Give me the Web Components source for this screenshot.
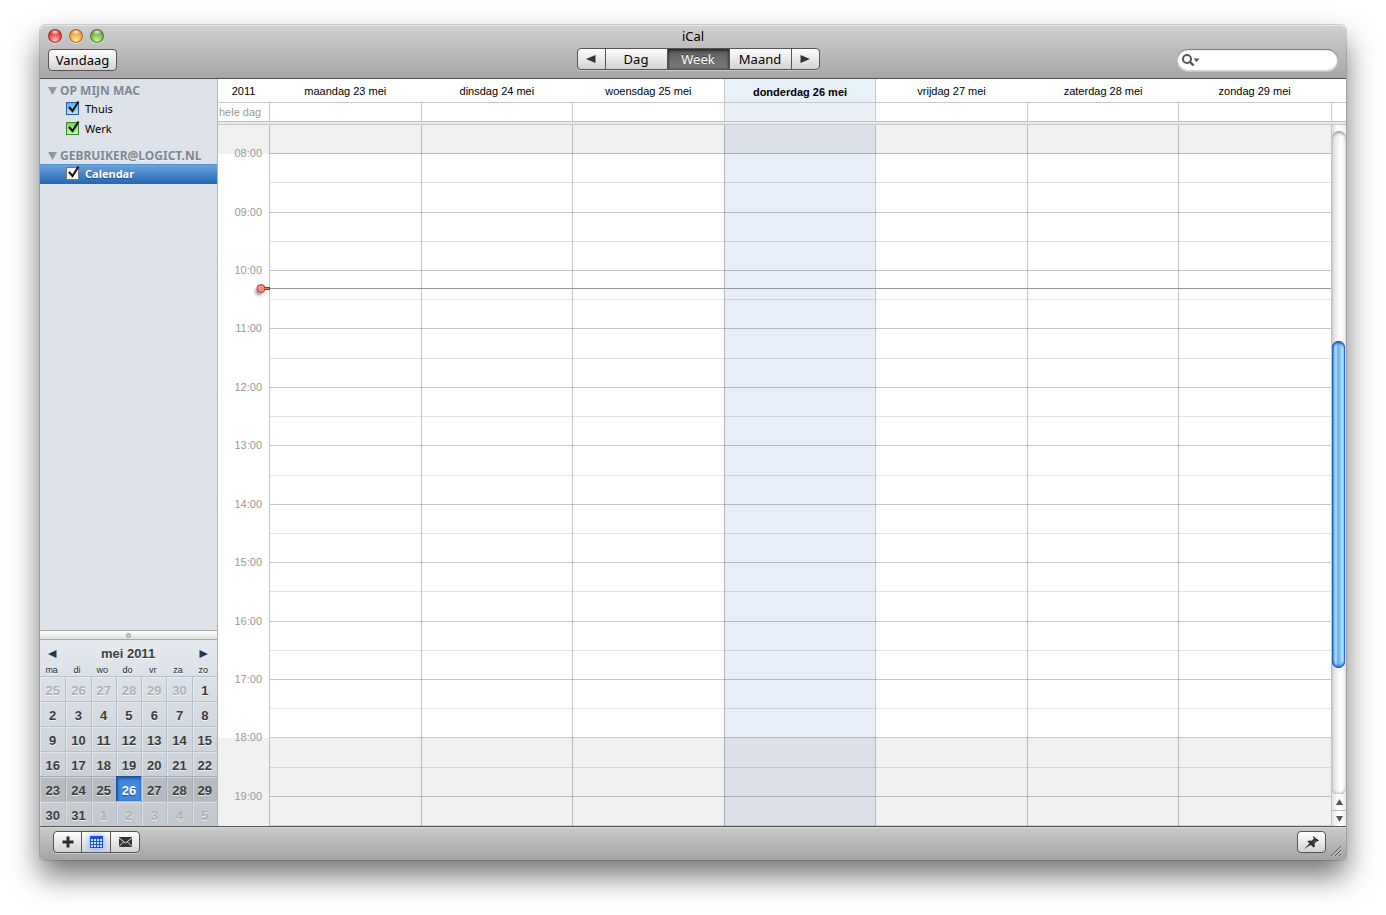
<!DOCTYPE html>
<html lang="nl">
<head>
<meta charset="utf-8">
<title>iCal</title>
<style>
  :root {
    --ui: "Noto Sans", "Open Sans", sans-serif;
    --helv: "Liberation Sans", Arial, sans-serif;
    --edge: #555;
    --line: rgba(0, 0, 0, .22);
    --half: rgba(0, 0, 0, .11);
  }
  html, body { margin: 0; height: 100%; }
  body {
    box-sizing: border-box;
    padding: 25px 40px 55px;
    background: #fff;
    color: #000;
    font-family: var(--ui);
    overflow: hidden;
  }
</style>
</head>
<body>
<ical-window></ical-window>

<script>
const define = (name, html, setup) => {
  const tpl = document.createElement('template');
  tpl.innerHTML = html;
  customElements.define(name, class extends HTMLElement {
    constructor() {
      super();
      this.attachShadow({ mode: 'open' }).append(tpl.content.cloneNode(true));
    }
    connectedCallback() { if (setup) setup(this, this.shadowRoot); }
  });
};

const buttonCss = `
  button {
    box-sizing: border-box;
    height: 22px;
    margin: 0;
    padding: 0;
    border: 1px solid #555;
    background: linear-gradient(#fdfdfd, #e9e9e9 50%, #d2d2d2);
    color: #000;
    font: 13px/20px var(--ui);
    display: flex;
    align-items: center;
    justify-content: center;
  }
  svg { display: block; }
`;

/* A row of joined push buttons */
define('segment-group', `
  <style>
    :host { display: flex; border-radius: 4px; box-shadow: 0 1px 0 rgba(255,255,255,.35); }
    ::slotted(push-button:not(:first-child)) { margin-left: -1px; }
  </style>
  <slot></slot>`);

define('push-button', `
  <style>
    :host { display: block; }
    ${buttonCss}
    button { width: 100%; border-radius: 4px; }
    :host([seg]) button { border-radius: 0; }
    :host([seg=first]) button { border-radius: 4px 0 0 4px; }
    :host([seg=last]) button { border-radius: 0 4px 4px 0; }
    :host([pressed]) button {
      background: linear-gradient(#5c5c5c, #6e6e6e 50%, #7a7a7a);
      box-shadow: inset 0 2px 3px rgba(0,0,0,.5), inset 0 0 3px rgba(0,0,0,.4);
      color: #fff;
      text-shadow: 0 -1px 0 rgba(0,0,0,.4);
    }
  </style>
  <button type="button"><slot></slot></button>`,
  (host, root) => {
    const label = host.getAttribute('label');
    if (label) root.querySelector('button').setAttribute('aria-label', label);
  });

define('traffic-lights', `
  <style>
    :host { display: flex; gap: 7px; }
    button {
      width: 14px; height: 14px; padding: 0; border: 0; border-radius: 50%;
      background:
        radial-gradient(ellipse 5px 3px at 50% 20%, rgba(255,255,255,.85), rgba(255,255,255,0)),
        radial-gradient(circle at 50% 85%, var(--lo), var(--mid) 50%, var(--hi) 90%);
      box-shadow: inset 0 0 1px 1px var(--rim), 0 1px 0 rgba(255,255,255,.5);
    }
    .r { --lo: #ffc4c4; --mid: #ee4a4c; --hi: #b3191f; --rim: #8d2b2c; }
    .y { --lo: #fff2a0; --mid: #f6ae46; --hi: #c9701c; --rim: #97602a; }
    .g { --lo: #d5f5a2; --mid: #7fbf55; --hi: #42872c; --rim: #40702f; }
  </style>
  <button class="r" type="button" aria-label="Sluit"></button>
  <button class="y" type="button" aria-label="Minimaliseer"></button>
  <button class="g" type="button" aria-label="Zoom"></button>`);

define('search-field', `
  <style>
    :host {
      box-sizing: border-box;
      display: flex; align-items: center;
      width: 161px; height: 22px; padding: 0 10px 0 4px;
      border-radius: 11px;
      background: #fff;
      box-shadow: inset 0 1px 1px #777, inset 0 0 1px 1px rgba(0,0,0,.18), 0 1px 0 rgba(255,255,255,.3);
    }
    label { flex: none; }
    svg { display: block; }
    input { flex: 1; min-width: 0; border: 0; padding: 0 4px; background: none; outline: 0; font: 11px/14px var(--ui); }
  </style>
  <label for="q" aria-label="Zoek">
    <svg width="19" height="16" viewBox="0 0 19 16">
      <circle cx="6" cy="7" r="4" fill="none" stroke="#555" stroke-width="2"/>
      <path d="M9 10l3.500 3.500" stroke="#555" stroke-width="2.400"/>
      <path d="M12.500 6.500h6l-3 3.500z" fill="#555"/>
    </svg>
  </label>
  <input id="q" type="text">`);

define('ical-toolbar', `
  <style>
    :host {
      box-sizing: border-box;
      display: grid;
      grid-template-columns: 1fr auto 1fr;
      grid-template-rows: 22px 22px;
      align-items: center;
      row-gap: 1px;
      height: 54px;
      padding: 0 8px;
      border-bottom: 1px solid var(--edge);
      border-radius: 5px 5px 0 0;
      background: linear-gradient(#d0d0d0, #a6a6a6);
      box-shadow: inset 0 1px 0 #e6e6e6;
    }
    h1 { margin: 0; font: 13px/18px var(--ui); text-align: center; }
    segment-group { margin-left: 10px; }
    .arrow { width: 29px; }
    .view { width: 63px; }
    .today { width: 69px; padding-top: 2px; }
    search-field { justify-self: end; margin-top: 2px; }
  </style>
  <traffic-lights></traffic-lights><h1>iCal</h1><span></span>
  <push-button class="today">Vandaag</push-button>
  <segment-group>
    <push-button class="arrow" seg="first" label="Vorige"><svg width="10" height="10"><path d="M9.500 1v8L0 5z" fill="#333"/></svg></push-button>
    <push-button class="view" seg>Dag</push-button>
    <push-button class="view" seg pressed>Week</push-button>
    <push-button class="view" seg>Maand</push-button>
    <push-button class="arrow" seg="last" label="Volgende"><svg width="10" height="10"><path d="M.5 1v8L10 5z" fill="#333"/></svg></push-button>
  </segment-group>
  <search-field></search-field>`);

/* Sidebar: a group heading with its calendars */
define('calendar-group', `
  <style>
    :host { display: block; }
    h2 {
      display: flex; align-items: center; gap: 3px;
      margin: 0; padding-left: 8px;
      font: bold 12px/16px var(--ui);
      color: #7d8794;
      text-shadow: 0 1px 0 rgba(255,255,255,.5);
    }
    svg { flex: none; }
  </style>
  <h2><svg width="9" height="8"><path d="M0 0h9L4.500 8z" fill="#8e99a6"/></svg><span></span></h2>
  <slot></slot>`,
  (host, root) => { root.querySelector('span').textContent = host.getAttribute('name'); });

define('calendar-item', `
  <style>
    :host { display: block; --a: #f3f3f3; --b: #fff; --rim: #777; }
    :host([tint=blue]) { --a: #5eaaf0; --b: #b4e6ff; --rim: #2d5f96; }
    :host([tint=green]) { --a: #74d456; --b: #c4f8a4; --rim: #3d8a2c; }
    label { display: flex; align-items: center; gap: 4px; height: 20px; padding-left: 26px; font: 11px/20px var(--ui); }
    :host([selected]) label {
      background: linear-gradient(#5392d2 1px, #6ba3dc 1px, #2368b3);
      color: #fff; font-weight: bold;
      text-shadow: 0 1px 1px rgba(0,0,0,.4);
    }
    input {
      appearance: none; flex: none; margin: 0 0 2px; width: 15px; height: 16px;
      background:
        url("data:image/svg+xml,%3Csvg xmlns='http://www.w3.org/2000/svg' width='15' height='16'%3E%3Cpath d='M3 7l3.500 4L12.500 1.500' fill='none' stroke='%23111' stroke-width='2'/%3E%3C/svg%3E"),
        linear-gradient(var(--a), var(--b)) 1px 3px / 11px 11px no-repeat,
        linear-gradient(var(--rim), var(--rim)) 0 2px / 13px 13px no-repeat;
    }
  </style>
  <label><input type="checkbox" checked><slot></slot></label>`);

define('mini-calendar', `
  <style>
    :host { display: block; background: linear-gradient(#e6eaef, #dce1e8 20%, #c3c8ce); font-family: var(--helv); color: #3c3c3c; }
    header { display: flex; align-items: center; justify-content: space-between; height: 24px; padding: 3px 9px 0 8px; box-sizing: border-box; }
    h2 { margin: 0; font: bold 13px/22px var(--helv); text-shadow: 0 1px 0 #fff; }
    button { border: 0; padding: 0; background: none; width: 9px; height: 10px; }
    svg { display: block; }
    table { width: 100%; table-layout: fixed; border-collapse: separate; border-spacing: 0; }
    th { padding: 0 2px 0 0; height: 12px; font: 9px/12px var(--helv); color: #222; text-shadow: 0 1px 0 #fff; }
    td {
      box-sizing: border-box; height: 25px; padding: 3px 0 0; text-align: center;
      font: bold 13px/20px var(--helv);
      border-top: 1px solid #b5c1ce; border-left: 1px solid #b5c1ce;
      box-shadow: inset 1px 1px 0 rgba(255,255,255,.35);
      text-shadow: 0 1px 0 rgba(255,255,255,.7);
    }
    td:first-child { border-left: 0; }
    td.out { color: #adb1b5; }
    tr.week td { background: rgba(0,0,0,.09); border-color: #a3acb8; }
    tr.week td.today {
      background: #3f88e2; border-color: #1c4f94; color: #fff;
      box-shadow: inset 0 2px 3px #2260ad, inset 1px 0 2px #2260ad;
      text-shadow: 0 1px 1px rgba(0,0,0,.4);
    }
  </style>
  <header>
    <button type="button" aria-label="Vorige maand"><svg width="9" height="10"><path d="M8.500 1v8L0 5z" fill="#1f3557"/></svg></button>
    <h2>mei 2011</h2>
    <button type="button" aria-label="Volgende maand"><svg width="9" height="10"><path d="M.5 1v8L9 5z" fill="#1f3557"/></svg></button>
  </header>
  <table><thead><tr></tr></thead><tbody></tbody></table>`,
  (host, root) => {
    root.querySelector('thead tr').innerHTML =
      ['ma', 'di', 'wo', 'do', 'vr', 'za', 'zo'].map(d => `<th scope="col">${d}</th>`).join('');
    let html = '';
    for (let w = 0; w < 6; w++) {
      html += `<tr${w === 4 ? ' class="week"' : ''}>`;
      for (let d = 0; d < 7; d++) {
        const n = w * 7 + d - 5;
        const day = n < 1 ? n + 30 : n > 31 ? n - 31 : n;
        const cls = n < 1 || n > 31 ? 'out' : n === 26 ? 'today' : '';
        html += `<td class="${cls}">${day}</td>`;
      }
      html += '</tr>';
    }
    root.querySelector('tbody').innerHTML = html;
  });

define('ical-sidebar', `
  <style>
    :host { display: flex; flex-direction: column; border-right: 1px solid #b4b4b4; background: #dee3ea; }
    nav { flex: 1; padding-top: 4px; display: flex; flex-direction: column; gap: 9px; }
    .splitter {
      box-sizing: border-box; height: 10px; display: flex; align-items: center; justify-content: center;
      border: solid #a8a8a8; border-width: 1px 0; background: linear-gradient(#fff, #e2e2e2);
    }
    .splitter i { width: 3px; height: 3px; border-radius: 50%; background: #ccc; box-shadow: 0 0 0 1px #aaa; }
  </style>
  <nav>
    <calendar-group name="OP MIJN MAC">
      <calendar-item tint="blue">Thuis</calendar-item>
      <calendar-item tint="green">Werk</calendar-item>
    </calendar-group>
    <calendar-group name="GEBRUIKER@LOGICT.NL">
      <calendar-item selected>Calendar</calendar-item>
    </calendar-group>
  </nav>
  <div class="splitter"><i></i></div>
  <mini-calendar></mini-calendar>`);

define('aqua-scrollbar', `
  <style>
    :host { box-sizing: border-box; display: flex; flex-direction: column; padding-top: 6px; border-left: 1px solid #c4c4c4; background: linear-gradient(90deg, #ddd, #fff 40%, #f0f0f0); }
    .track {
      flex: 1; display: flex; flex-direction: column;
      border-radius: 7px;
      background: linear-gradient(90deg, #d6d6d6, #ececec 25%, #fff 65%, #ececec);
      box-shadow: inset 0 3px 3px -1px #999, inset 0 -2px 2px -1px #bbb, 0 1px 0 #aaa;
    }
    .before { flex: 210; }
    .after { flex: 126; }
    .thumb {
      flex: 327; margin-right: 1px; border-radius: 7px;
      background: linear-gradient(90deg, #2c6fd8, #8fc3f6 20%, #b9dbfa 32%, #6db2f3 42%, #6fb8f6 55%, #b4f0ff 85%, #62a8e8);
      box-shadow: inset 0 0 1px 1px #2461bd, inset 0 3px 3px -1px #1c4f9c, inset 0 -3px 3px -1px #1c5fc0;
    }
    button { height: 16px; padding: 0; border: 0; background: linear-gradient(90deg, #e4e4e4, #fff 50%, #ececec); display: flex; align-items: center; justify-content: center; }
    button + button { border-top: 1px solid #bbb; }
  </style>
  <div class="track"><div class="before"></div><div class="thumb"></div><div class="after"></div></div>
  <button type="button" aria-label="Omhoog"><svg width="7" height="6"><path d="M0 6h7L3.500 0z" fill="#555"/></svg></button>
  <button type="button" aria-label="Omlaag"><svg width="7" height="6"><path d="M0 0h7L3.500 6z" fill="#555"/></svg></button>`);

define('week-view', `
  <style>
    :host { display: flex; flex-direction: column; min-width: 0; background: #fff; font: 11px/14px var(--helv); }
    .row { display: grid; grid-template-columns: 51px minmax(0, 1fr) 15px; }
    .days { display: grid; grid-template-columns: repeat(7, minmax(0, 1fr)); padding-right: 1px; }
    .names { height: 23px; border-bottom: 1px solid #c8c8c8; text-align: center; line-height: 24px; }
    .names .days > * { border-left: 1px solid transparent; }
    .names .today { font-weight: bold; background: #e8f0f8; border-left-color: #c0c4ca; line-height: 26px; height: 23px; }
    .names .today + * { border-left-color: #c0c4ca; }
    .allday { height: 18px; border-bottom: 1px solid #c0c0c0; line-height: 18px; color: #999; }
    .allday .gutter { padding-left: 1px; }
    .allday .days > *, .allday .end { border-left: 1px solid #c8c8c8; }
    .allday .today { background: #e8eff7; }
    .bar { height: 3px; box-sizing: border-box; background: #e9e9e9; border-bottom: 1px solid #c8c8c8; }
    .body { flex: 1; min-height: 0; }
    .body > .gutter {
      display: grid; grid-template-rows: repeat(12, minmax(0, 1fr)); align-items: center; justify-items: end;
      padding-right: 7px; color: #999; line-height: 12px;
    }
    .gutter span { padding-bottom: 2px; }
    .body > .gutter, .grid, .grid .days > * {
      --off: #f1f1f1; --on: #fff;
      background: linear-gradient(var(--off) calc(100% / 24), var(--on) 0, var(--on) calc(100% * 21 / 24), var(--off) 0);
    }
    .grid { display: grid; position: relative; }
    .grid > .days, .grid > .lines { grid-area: 1 / 1; }
    .grid .days > * { border-left: 1px solid var(--line); }
    .grid .days .today { --off: #dce0e9; --on: #e8eef7; }
    .lines { display: grid; grid-template-rows: repeat(24, minmax(0, 1fr)); margin-left: 1px; }
    .lines i { border-bottom: 1px solid var(--half); }
    .lines i:nth-child(odd) { border-bottom-color: var(--line); }
    .now { position: absolute; left: -12px; right: 0; top: 159px; display: flex; align-items: center; height: 9px; }
    .now::after { content: ""; flex: 1; height: 1px; background: #979797; }
    .now svg { overflow: visible; flex: none; }
  </style>
  <div class="row names"><div>2011</div><div class="days"></div><div></div></div>
  <div class="row allday"><div class="gutter">hele dag</div><div class="days"></div><div class="end"></div></div>
  <div class="bar"></div>
  <div class="row body">
    <div class="gutter"></div>
    <div class="grid">
      <div class="days"></div>
      <div class="lines"></div>
      <div class="now">
        <svg width="13" height="9" viewBox="1 0 13 9">
          <defs><filter id="soft" x="-50%" y="-50%" width="200%" height="200%"><feGaussianBlur stdDeviation="1.500"/></filter></defs>
          <circle cx="3" cy="7.500" r="4" fill="#000" opacity=".35" filter="url(#soft)"/>
          <path d="M8 4.500h6" stroke="#b82020" stroke-width="3"/>
          <path d="M9 4.500h4" stroke="#f27c7c" stroke-width="1"/>
          <circle cx="5" cy="4.500" r="4" fill="#f58a8a" stroke="#d03434"/>
        </svg>
      </div>
    </div>
    <aqua-scrollbar></aqua-scrollbar>
  </div>`,
  (host, root) => {
    const names = ['maandag 23 mei', 'dinsdag 24 mei', 'woensdag 25 mei', 'donderdag 26 mei', 'vrijdag 27 mei', 'zaterdag 28 mei', 'zondag 29 mei'];
    const cells = text => names.map((n, i) => `<div${i === 3 ? ' class="today"' : ''}>${text ? n : ''}</div>`).join('');
    root.querySelectorAll('.days').forEach((el, i) => { el.innerHTML = cells(i === 0); });
    root.querySelector('.body > .gutter').innerHTML =
      Array.from({ length: 12 }, (_, i) => `<span>${String(i + 8).padStart(2, '0')}:00</span>`).join('');
    root.querySelector('.lines').innerHTML = '<i></i>'.repeat(24);
  });

define('bottom-bar', `
  <style>
    :host {
      box-sizing: border-box; display: flex; align-items: flex-start; height: 34px;
      padding: 4px 3px 0 13px;
      border-top: 1px solid var(--edge);
      border-radius: 0 0 4px 4px;
      background: linear-gradient(#cbcbcb, #a3a3a3);
      box-shadow: inset 0 1px 0 #d8d8d8;
    }
    segment-group { margin-right: auto; }
    segment-group push-button { width: 30px; }
    segment-group push-button:first-child { width: 29px; }
    .pin { width: 29px; }
    .grip { align-self: flex-end; margin: 0 0 3px 3px; }
    .glow { filter: drop-shadow(0 0 3px #6fa8ff); }
  </style>
  <segment-group>
    <push-button seg="first" label="Nieuwe agenda"><svg width="12" height="12"><path d="M6 0.500v11M.5 6h11" stroke="#2c2c2c" stroke-width="3"/></svg></push-button>
    <push-button seg label="Toon minikalender"><svg class="glow" width="13" height="12">
      <path d="M0 0h13v12H0z" fill="#1f4fd0"/>
      <path d="M1 3h2v2H1zM4 3h2v2H4zM7 3h2v2H7zM10 3h2v2h-2zM1 6h2v2H1zM4 6h2v2H4zM7 6h2v2H7zM10 6h2v2h-2zM1 9h2v2H1zM4 9h2v2H4zM7 9h2v2H7zM10 9h2v2h-2z" fill="#d5e4ff"/></svg></push-button>
    <push-button seg="last" label="Toon meldingen"><svg width="13" height="10"><path d="M0 0h13v10H0z" fill="#333"/><path d="M0 1l6.500 5L13 1M0 9.500l4.500-4.500M13 9.500L8.500 5" fill="none" stroke="#ddd"/></svg></push-button>
  </segment-group>
  <push-button class="pin" label="Taken"><svg width="15" height="13" viewBox="0 0 15 13">
    <path d="M9 0l6 4.500-1.500 1-1-.2-2 2.700.5 2.500-1.500 1L3.500 5.500 5 4.500l2.500.3L10 2.500 9 1.500z" fill="#333"/>
    <path d="M6 7l1.500 1.500L0 13z" fill="#333"/><path d="M9.500 4.500l1.500 1-2 2" stroke="#777" fill="none" stroke-width=".8"/></svg></push-button>
  <svg class="grip" width="14" height="13"><path d="M2 12L12 2M6 12l6-6M10 12l2-2" stroke="#555"/><path d="M3 12.500l9.500-9.500M7 12.500l5.500-5.500M11 12.500l1.500-1.500" stroke="#ddd" stroke-width=".7"/></svg>`);

define('ical-window', `
  <style>
    :host {
      display: grid;
      grid-template: auto minmax(0, 1fr) auto / 178px minmax(0, 1fr);
      height: 100%;
      border-radius: 5px 5px 4px 4px;
      box-shadow: 0 0 0 1px rgba(0,0,0,.15), 0 16px 30px rgba(0,0,0,.55);
    }
    ical-toolbar, bottom-bar { grid-column: 1 / -1; }
  </style>
  <ical-toolbar></ical-toolbar>
  <ical-sidebar></ical-sidebar>
  <week-view></week-view>
  <bottom-bar></bottom-bar>`);
</script>
</body>
</html>
